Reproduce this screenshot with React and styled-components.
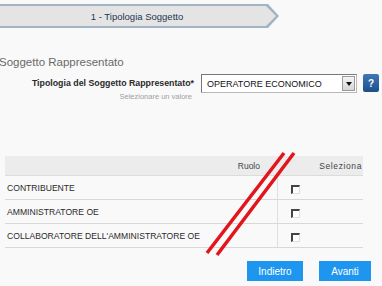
import React from "react";
import styled, { createGlobalStyle } from "styled-components";

const GlobalStyle = createGlobalStyle`
  html, body {
    margin: 0;
    padding: 0;
    background: #f9f9f9;
    font-family: "Liberation Sans", Arial, sans-serif;
  }
`;

const Page = styled.div`
  position: relative;
  width: 382px;
  height: 286px;
  overflow: hidden;
`;

const StepOuter = styled.div`
  margin-top: 4px;
  width: 279px;
  height: 24px;
  padding: 2px 0;
  box-sizing: border-box;
  background: #a3b3c2;
  clip-path: polygon(0 0, 268px 0, 279px 12px, 268px 24px, 0 24px);
`;

const StepInner = styled.div`
  width: 276px;
  height: 20px;
  background: #e4e4e4;
  clip-path: polygon(0 0, 266px 0, 276px 10px, 266px 20px, 0 20px);
  display: flex;
  align-items: center;
  justify-content: center;
  font-size: 9.5px;
  color: #1f3550;
  padding-right: 2px;
  box-sizing: border-box;
`;

const SectionTitle = styled.div`
  margin: 27px 0 0 -1px;
  font-size: 11.5px;
  line-height: 14px;
  color: #6a6a6a;
`;

const FormRow = styled.div`
  display: flex;
  align-items: flex-start;
  margin-top: 5px;
`;

const LabelCol = styled.div`
  width: 194px;
  text-align: right;
  padding-top: 4px;
`;

const Label = styled.div`
  font-size: 8.8px;
  font-weight: bold;
  color: #2a2a2a;
  line-height: 11px;
`;

const Hint = styled.div`
  margin-top: 3px;
  margin-right: 2px;
  font-size: 7.5px;
  color: #a0a0a0;
  line-height: 9px;
`;

const Select = styled.div`
  margin-left: 7px;
  width: 156px;
  height: 19px;
  box-sizing: border-box;
  background: #fff;
  border: 1px solid #b8b8b8;
  border-top-color: #777;
  border-left-color: #777;
  display: flex;
  align-items: center;
  justify-content: space-between;
  padding: 1px;
`;

const SelectText = styled.span`
  font-size: 9px;
  color: #111;
  padding-left: 4px;
`;

const SelectArrow = styled.span`
  width: 13px;
  height: 15px;
  box-sizing: border-box;
  border: 1px solid #9a9a9a;
  background: linear-gradient(#f4f4f4, #d6d6d6);
  display: flex;
  align-items: center;
  justify-content: center;
  &::after {
    content: "";
    border-left: 3px solid transparent;
    border-right: 3px solid transparent;
    border-top: 4px solid #111;
  }
`;

const Help = styled.div`
  margin-left: 6px;
  width: 16px;
  height: 18px;
  border-radius: 2px;
  background: linear-gradient(#3f78b6, #1b4f8c);
  color: #fff;
  font-size: 10px;
  font-weight: bold;
  display: flex;
  align-items: center;
  justify-content: center;
`;

const Table = styled.div`
  margin: 55px 0 0 5px;
  width: 358px;
`;

const HeaderRow = styled.div`
  display: grid;
  grid-template-columns: 273px 85px;
  height: 19px;
  background: #ececec;
  border-bottom: 1px solid #dcdcdc;
  font-size: 8.5px;
  color: #444;
  align-items: center;
`;

const HeaderCell = styled.div`
  text-align: right;
  white-space: nowrap;
  padding-right: ${(p) => p.$pad}px;
  letter-spacing: ${(p) => p.$ls || 0}px;
`;

const Row = styled.div`
  display: grid;
  grid-template-columns: 273px 85px;
  height: 24px;
  border-bottom: 1px solid #d8d8d8;
  box-sizing: border-box;
`;

const RoleCell = styled.div`
  padding: 7px 0 0 2px;
  font-size: 8.6px;
  color: #2a2a2a;
  border-right: 1px solid #dedede;
`;

const CheckCell = styled.div`
  padding: 9px 0 0 13px;
`;

const Check = styled.span`
  display: block;
  width: 9px;
  height: 9px;
  box-sizing: border-box;
  background: #fff;
  border: 2px solid #444;
  border-right: 1px solid #ddd;
  border-bottom: 1px solid #ddd;
`;

const Actions = styled.div`
  display: flex;
  justify-content: flex-end;
  gap: 16px;
  margin: 13px 11px 0 0;
`;

const Button = styled.div`
  width: ${(p) => p.$w}px;
  height: 20px;
  background: #1e96ef;
  color: #fff;
  font-size: 10px;
  display: flex;
  align-items: center;
  justify-content: center;
`;

const Stripes = styled.svg`
  position: absolute;
  left: 0;
  top: 0;
  pointer-events: none;
`;

const roles = [
  "CONTRIBUENTE",
  "AMMINISTRATORE OE",
  "COLLABORATORE DELL'AMMINISTRATORE OE",
];

export default function App() {
  return (
    <Page>
      <GlobalStyle />
      <StepOuter>
        <StepInner>1 - Tipologia Soggetto</StepInner>
      </StepOuter>
      <SectionTitle>Soggetto Rappresentato</SectionTitle>
      <FormRow>
        <LabelCol>
          <Label>Tipologia del Soggetto Rappresentato*</Label>
          <Hint>Selezionare un valore</Hint>
        </LabelCol>
        <Select>
          <SelectText>OPERATORE ECONOMICO</SelectText>
          <SelectArrow />
        </Select>
        <Help>?</Help>
      </FormRow>
      <Table>
        <HeaderRow>
          <HeaderCell $pad={18}>Ruolo</HeaderCell>
          <HeaderCell $pad={1} $ls={0.6}>Seleziona</HeaderCell>
        </HeaderRow>
        {roles.map((r) => (
          <Row key={r}>
            <RoleCell>{r}</RoleCell>
            <CheckCell>
              <Check />
            </CheckCell>
          </Row>
        ))}
      </Table>
      <Actions>
        <Button $w={56}>Indietro</Button>
        <Button $w={52}>Avanti</Button>
      </Actions>
      <Stripes width="382" height="286">
        <line x1="284" y1="153" x2="207" y2="253" stroke="#e3141b" strokeWidth="3.5" />
        <line x1="294" y1="153" x2="217" y2="255" stroke="#e3141b" strokeWidth="3.5" />
      </Stripes>
    </Page>
  );
}
